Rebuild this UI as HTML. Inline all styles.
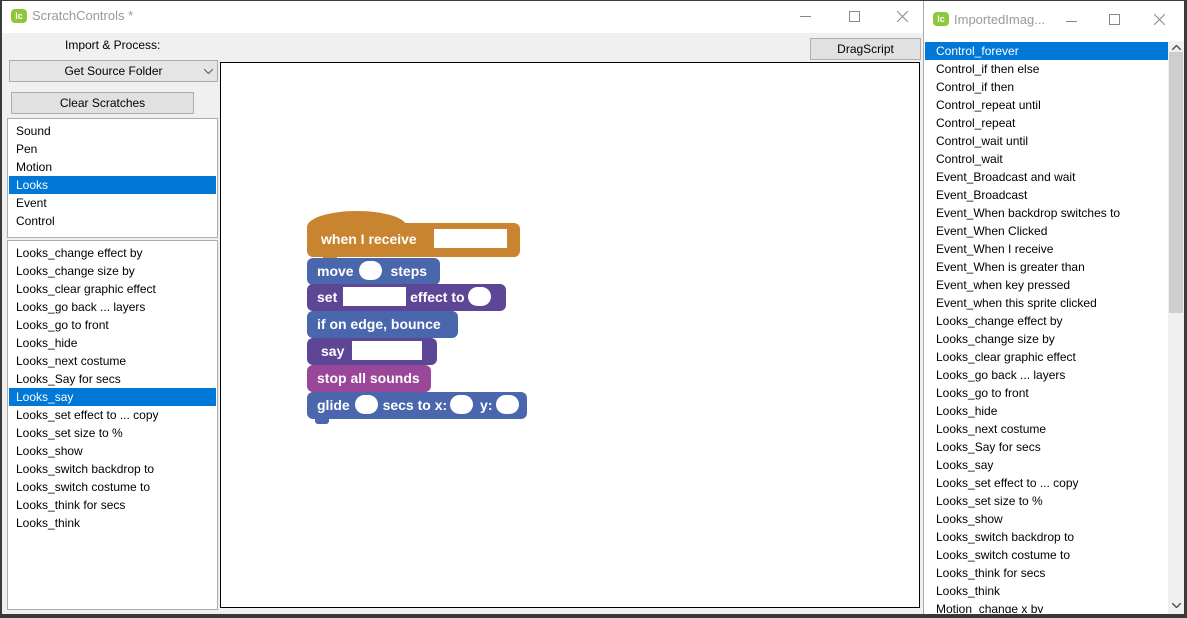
<!DOCTYPE html>
<html><head><meta charset="utf-8"><style>
*{margin:0;padding:0;box-sizing:border-box}
body{width:1187px;height:618px;background:#3a3a3a;position:relative;overflow:hidden;font-family:"Segoe UI","Liberation Sans",sans-serif;font-size:12px;color:#000}
.abs{position:absolute}
.win{position:absolute;background:#f0f0f0}
.tb{position:absolute;left:0;right:0;top:0;background:#fff}
.logo{position:absolute;width:16px;height:14px;background:#8dc63f;border-radius:4px;color:#fff;font-size:9px;font-weight:bold;text-align:center;line-height:14px}
.ttl{position:absolute;color:#999;font-size:13px}
.btn{position:absolute;background:#e1e1e1;border:1px solid #adadad;text-align:center;line-height:19px}
.lb{position:absolute;background:#fff;border:1px solid #acacac}
.it{height:18px;line-height:18px;padding-left:7px;white-space:nowrap}
.sel{background:#0078d7;color:#fff}
.blk{position:absolute;color:#fff;font-weight:bold;font-size:14px;border-radius:6px;line-height:26px;padding-left:10px;font-family:"Liberation Sans",sans-serif;white-space:nowrap}
.inp{display:inline-block;background:#fff;height:19px;vertical-align:middle;margin-top:-3px}
.ov{display:inline-block;background:#fff;height:19px;width:23px;border-radius:10px;vertical-align:middle;margin-top:-3px}
.nub{position:absolute;left:8px;bottom:-5px;width:14px;height:6px;border-radius:0 0 3px 3px}
</style></head><body>
<div class="win" style="left:2px;top:1px;width:921px;height:613px">
 <div class="tb" style="height:32px"></div>
 <div class="logo" style="left:9px;top:8px">lc</div>
 <div class="ttl" style="left:30px;top:7px">ScratchControls *</div>
 <div class="abs" style="left:798px;top:15px;width:11px;height:1px;background:#888"></div>
 <div class="abs" style="left:847px;top:10px;width:11px;height:11px;border:1px solid #888"></div>
 <svg class="abs" style="left:895px;top:10px" width="11" height="11"><path d="M0 0L11 11M11 0L0 11" stroke="#888" stroke-width="1"/></svg>
 <div class="abs" style="left:63px;top:37px;font-size:12px">Import &amp; Process:</div>
 <div class="btn" style="left:7px;top:59px;width:209px;height:22px;background:#e5e5e5;border-color:#acacac;line-height:20px">Get Source Folder<svg class="abs" style="right:4px;top:8px" width="9" height="5"><path d="M0 0L4.5 4.5L9 0" stroke="#555" fill="none"/></svg></div>
 <div class="btn" style="left:9px;top:91px;width:183px;height:22px;line-height:20px">Clear Scratches</div>
 <div class="btn" style="left:808px;top:37px;width:111px;height:22px;line-height:20px">DragScript</div>
 <div class="lb" style="left:5px;top:117px;width:211px;height:120px;padding:3px 1px">
  <div class="it">Sound</div><div class="it">Pen</div><div class="it">Motion</div><div class="it sel">Looks</div><div class="it">Event</div><div class="it">Control</div>
 </div>
 <div class="lb" style="left:5px;top:239px;width:211px;height:370px;padding:3px 1px">
  <div class="it">Looks_change effect by</div><div class="it">Looks_change size by</div><div class="it">Looks_clear graphic effect</div><div class="it">Looks_go back ... layers</div><div class="it">Looks_go to front</div><div class="it">Looks_hide</div><div class="it">Looks_next costume</div><div class="it">Looks_Say for secs</div><div class="it sel">Looks_say</div><div class="it">Looks_set effect to ... copy</div><div class="it">Looks_set size to %</div><div class="it">Looks_show</div><div class="it">Looks_switch backdrop to</div><div class="it">Looks_switch costume to</div><div class="it">Looks_think for secs</div><div class="it">Looks_think</div>
 </div>
 <div class="abs" style="left:218px;top:61px;width:700px;height:546px;background:#fff;border:1px solid #000"></div>
</div>
<div class="abs" style="left:307px;top:211px;width:100px;height:30px;background:#c8842f;border-radius:50px 50px 0 0/16px 16px 0 0"></div>
<div class="blk" style="left:307px;top:223px;width:213px;height:34px;background:#c8842f;line-height:32px;padding-left:14px">when I receive <span class="inp" style="width:73px;margin-left:13px"></span><div class="nub" style="background:#c8842f;left:16px"></div></div>
<div class="blk" style="left:307px;top:258px;width:133px;height:27px;background:#4a66ad">move <span class="ov" style="margin:-3px 8px 0 2px"></span>steps<div class="nub" style="background:#4a66ad"></div></div>
<div class="blk" style="left:307px;top:284px;width:199px;height:27px;background:#5e4697">set <span class="inp" style="width:63px;margin:-3px 4px 0 2px"></span>effect to <span class="ov"></span><div class="nub" style="background:#5e4697"></div></div>
<div class="blk" style="left:307px;top:311px;width:151px;height:27px;background:#4a66ad">if on edge, bounce<div class="nub" style="background:#4a66ad"></div></div>
<div class="blk" style="left:307px;top:338px;width:130px;height:27px;background:#5e4697;padding-left:14px">say <span class="inp" style="width:70px;margin-left:4px"></span><div class="nub" style="background:#5e4697"></div></div>
<div class="blk" style="left:307px;top:365px;width:124px;height:27px;background:#9b4799">stop all sounds<div class="nub" style="background:#9b4799"></div></div>
<div class="blk" style="left:307px;top:392px;width:220px;height:27px;background:#4a66ad">glide <span class="ov" style="margin:-3px 5px 0 1px"></span>secs to x:<span class="ov" style="margin-left:3px"></span> <span style="margin-left:3px">y:</span><span class="ov" style="margin-left:3px"></span><div class="nub" style="background:#4a66ad"></div></div>
<div class="abs" style="left:923px;top:1px;width:261px;height:613px;background:#fff;border-left:1px solid #aaa">
 <div class="logo" style="left:9px;top:11px">lc</div>
 <div class="ttl" style="left:30px;top:11px">ImportedImag...</div>
 <div class="abs" style="left:142px;top:20px;width:11px;height:1px;background:#888"></div>
 <div class="abs" style="left:185px;top:13px;width:11px;height:11px;border:1px solid #888"></div>
 <svg class="abs" style="left:230px;top:13px" width="11" height="11"><path d="M0 0L11 11M11 0L0 11" stroke="#888" stroke-width="1"/></svg>
 <div class="abs" style="left:1px;top:40px;width:244px;height:572px;overflow:hidden;padding-top:1px">
  <div class="it sel" style="padding-left:11px">Control_forever</div>
  <div style="padding-left:11px">
  <div class="it" style="padding:0">Control_if then else</div><div class="it" style="padding:0">Control_if then</div><div class="it" style="padding:0">Control_repeat until</div><div class="it" style="padding:0">Control_repeat</div><div class="it" style="padding:0">Control_wait until</div><div class="it" style="padding:0">Control_wait</div><div class="it" style="padding:0">Event_Broadcast and wait</div><div class="it" style="padding:0">Event_Broadcast</div><div class="it" style="padding:0">Event_When backdrop switches to</div><div class="it" style="padding:0">Event_When Clicked</div><div class="it" style="padding:0">Event_When I receive</div><div class="it" style="padding:0">Event_When is greater than</div><div class="it" style="padding:0">Event_when key pressed</div><div class="it" style="padding:0">Event_when this sprite clicked</div><div class="it" style="padding:0">Looks_change effect by</div><div class="it" style="padding:0">Looks_change size by</div><div class="it" style="padding:0">Looks_clear graphic effect</div><div class="it" style="padding:0">Looks_go back ... layers</div><div class="it" style="padding:0">Looks_go to front</div><div class="it" style="padding:0">Looks_hide</div><div class="it" style="padding:0">Looks_next costume</div><div class="it" style="padding:0">Looks_Say for secs</div><div class="it" style="padding:0">Looks_say</div><div class="it" style="padding:0">Looks_set effect to ... copy</div><div class="it" style="padding:0">Looks_set size to %</div><div class="it" style="padding:0">Looks_show</div><div class="it" style="padding:0">Looks_switch backdrop to</div><div class="it" style="padding:0">Looks_switch costume to</div><div class="it" style="padding:0">Looks_think for secs</div><div class="it" style="padding:0">Looks_think</div><div class="it" style="padding:0">Motion_change x by</div>
  </div>
 </div>
 <div class="abs" style="left:244px;top:40px;width:16px;height:573px;background:#f0f0f0">
  <svg class="abs" style="left:4px;top:4px" width="9" height="5"><path d="M0 5L4.5 0.5L9 5" stroke="#555" stroke-width="1.5" fill="none"/></svg>
  <div class="abs" style="left:1px;top:11px;width:14px;height:261px;background:#cdcdcd"></div>
  <svg class="abs" style="left:4px;top:562px" width="9" height="5"><path d="M0 0L4.5 4.5L9 0" stroke="#555" stroke-width="1.5" fill="none"/></svg>
 </div>
</div>
</body></html>
